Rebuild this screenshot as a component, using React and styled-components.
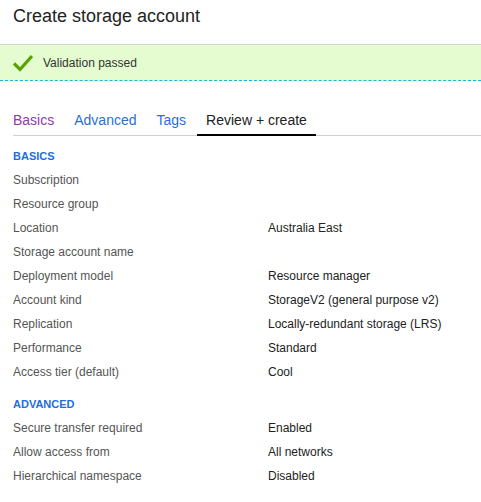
import React from "react";
import styled, { createGlobalStyle } from "styled-components";

const Global = createGlobalStyle`
  body { margin: 0; background: #fff; font-family: "Segoe UI", "Liberation Sans", Arial, sans-serif; color: #323130; }
`;

const Page = styled.div`
  width: 481px;
  height: 502px;
  overflow: hidden;
`;

const Title = styled.h1`
  margin: 0;
  padding: 4px 13px 0;
  height: 40px;
  font-size: 18px;
  font-weight: 400;
  line-height: 24px;
  color: #222;
  border-bottom: 1px solid #d4d4d4;
`;

const Banner = styled.div`
  display: flex;
  align-items: center;
  gap: 10px;
  height: 35px;
  padding-left: 13px;
  background: #e5fcd0;
  border-bottom: 1px dashed #1fb3e0;
  font-size: 12px;
  color: #333;
`;

const Tabs = styled.div`
  display: flex;
  margin: 27px 0 0 13px;
  border-bottom: 1px solid #d0d0d0;
`;

const Tab = styled.div`
  padding: 4px 9px 6px;
  margin-right: 2px;
  font-size: 14px;
  color: ${p => (p.$active ? "#222" : p.$visited ? "#8d3aa8" : "#2b6fd6")};
  border-bottom: 2px solid ${p => (p.$active ? "#000" : "transparent")};
  margin-bottom: -1px;
  &:first-child { padding-left: 0; }
`;

const Section = styled.div`
  padding: 14px 13px 6px;
  font-size: 11px;
  font-weight: 600;
  color: #1e6fd9;
`;

const Row = styled.div`
  display: grid;
  grid-template-columns: 255px 1fr;
  height: 24px;
  align-items: center;
  padding-left: 13px;
  font-size: 12px;
`;

const Label = styled.div`color: #555;`;
const Value = styled.div`color: #222;`;

const basics = [
  ["Subscription", ""],
  ["Resource group", ""],
  ["Location", "Australia East"],
  ["Storage account name", ""],
  ["Deployment model", "Resource manager"],
  ["Account kind", "StorageV2 (general purpose v2)"],
  ["Replication", "Locally-redundant storage (LRS)"],
  ["Performance", "Standard"],
  ["Access tier (default)", "Cool"],
];

const advanced = [
  ["Secure transfer required", "Enabled"],
  ["Allow access from", "All networks"],
  ["Hierarchical namespace", "Disabled"],
];

export default function App() {
  return (
    <Page>
      <Global />
      <Title>Create storage account</Title>
      <Banner>
        <svg width="20" height="18" viewBox="0 0 20 18">
          <path d="M1 9.5 L7 15.5 L19 2" fill="none" stroke="#57a300" strokeWidth="3.2" />
        </svg>
        Validation passed
      </Banner>
      <Tabs>
        <Tab $visited>Basics</Tab>
        <Tab>Advanced</Tab>
        <Tab>Tags</Tab>
        <Tab $active>Review + create</Tab>
      </Tabs>
      <Section>BASICS</Section>
      {basics.map(([l, v]) => (
        <Row key={l}><Label>{l}</Label><Value>{v}</Value></Row>
      ))}
      <Section>ADVANCED</Section>
      {advanced.map(([l, v]) => (
        <Row key={l}><Label>{l}</Label><Value>{v}</Value></Row>
      ))}
    </Page>
  );
}
